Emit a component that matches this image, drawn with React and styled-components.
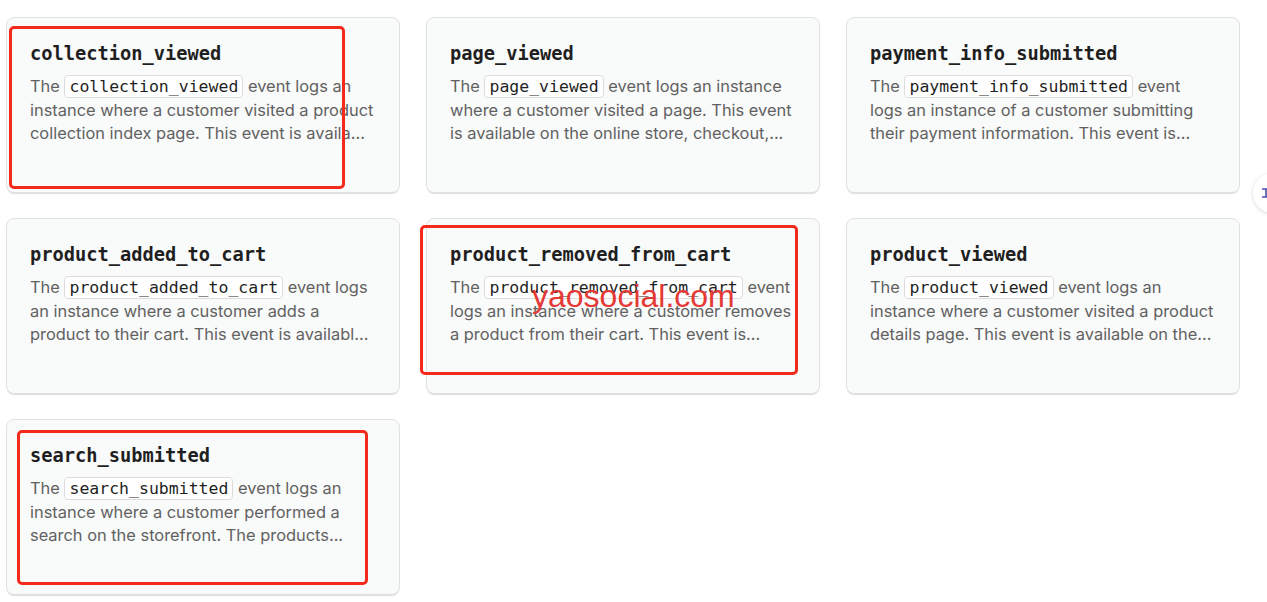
import styled, { createGlobalStyle } from 'styled-components';

const GlobalStyle = createGlobalStyle`
  html, body {
    margin: 0;
    padding: 0;
    background: #ffffff;
  }
  body {
    font-family: 'Inter', 'Liberation Sans', sans-serif;
    overflow: hidden;
  }
`;

const events = [
  {
    name: 'collection_viewed',
    rest: 'event logs an instance where a customer visited a product collection index page. This event is availa...',
  },
  {
    name: 'page_viewed',
    rest: 'event logs an instance where a customer visited a page. This event is available on the online store, checkout,...',
  },
  {
    name: 'payment_info_submitted',
    rest: 'event logs an instance of a customer submitting their payment information. This event is...',
  },
  {
    name: 'product_added_to_cart',
    rest: 'event logs an instance where a customer adds a product to their cart. This event is availabl...',
  },
  {
    name: 'product_removed_from_cart',
    rest: 'event logs an instance where a customer removes a product from their cart. This event is...',
  },
  {
    name: 'product_viewed',
    rest: 'event logs an instance where a customer visited a product details page. This event is available on the...',
  },
  {
    name: 'search_submitted',
    rest: 'event logs an instance where a customer performed a search on the storefront. The products...',
  },
];

// annotation boxes drawn over the screenshot
const marks = [
  { left: 9, top: 26, width: 336, height: 163 },
  { left: 420, top: 225, width: 378, height: 150 },
  { left: 17, top: 430, width: 351, height: 155 },
];

const App = () => {
  return (
    <Page>
      <GlobalStyle />
      <Grid>
        {events.map((ev) => (
          <Card key={ev.name}>
            <Title>{ev.name}</Title>
            <Desc>
              The <Code>{ev.name}</Code> {ev.rest}
            </Desc>
          </Card>
        ))}
      </Grid>
      {marks.map((m, i) => (
        <Mark key={i} style={m} />
      ))}
      <Watermark>yaosocial.com</Watermark>
      <SideButton>
        <svg width="12" height="12" viewBox="0 0 12 12">
          <path d="M2 2h8M2 10h8M6 2v8" stroke="#4a4fb0" strokeWidth="1.6" fill="none" />
        </svg>
      </SideButton>
    </Page>
  );
};

const Page = styled.div`
  position: relative;
  width: 1267px;
  height: 602px;
  padding: 17px 6px 0;
  box-sizing: border-box;
`;

const Grid = styled.div`
  display: grid;
  grid-template-columns: repeat(3, 394px);
  grid-auto-rows: 176px;
  column-gap: 26px;
  row-gap: 25px;
`;

const Card = styled.div`
  box-sizing: border-box;
  padding: 23px 24px 0 23px;
  background: #f9fafa;
  border: 1px solid #e0e1e1;
  border-radius: 8px;
  box-shadow: 0 2px 1px -1px rgba(0, 0, 0, 0.14);
  overflow: hidden;
`;

const Title = styled.h3`
  margin: 0;
  font-family: 'DejaVu Sans Mono', 'Liberation Mono', monospace;
  font-weight: 700;
  font-size: 18.7px;
  line-height: 25px;
  color: #1f1f1f;
`;

const Desc = styled.p`
  margin: 9px 0 0;
  font-size: 16.4px;
  line-height: 23.5px;
  color: #616161;
  display: -webkit-box;
  -webkit-line-clamp: 3;
  -webkit-box-orient: vertical;
  overflow: hidden;
`;

const Code = styled.code`
  display: inline-block;
  font-family: 'DejaVu Sans Mono', 'Liberation Mono', monospace;
  font-size: 16.5px;
  line-height: 21px;
  color: #1f1f1f;
  background: #ffffff;
  border: 1px solid #dcdcdc;
  border-radius: 4px;
  padding: 0 4px;
`;

const Mark = styled.div`
  position: absolute;
  box-sizing: border-box;
  border: 3px solid #f42a1c;
  border-radius: 5px;
  pointer-events: none;
`;

const Watermark = styled.div`
  position: absolute;
  left: 532px;
  top: 278px;
  font-family: 'Liberation Sans', Arial, sans-serif;
  font-size: 32px;
  line-height: 36px;
  color: #e53935;
  pointer-events: none;
`;

const SideButton = styled.div`
  position: absolute;
  left: 1253px;
  top: 173px;
  width: 40px;
  height: 40px;
  border-radius: 50%;
  background: #ffffff;
  box-shadow: 0 1px 4px rgba(0, 0, 0, 0.15);
  display: flex;
  align-items: center;
  padding-left: 7px;
  box-sizing: border-box;
`;

export default App;
